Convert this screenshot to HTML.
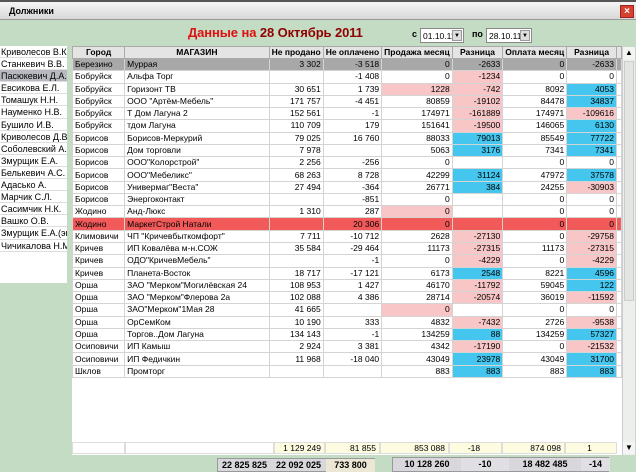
<!DOCTYPE html>
<html><head><meta charset="utf-8"><style>
*{margin:0;padding:0;box-sizing:border-box}
body{width:636px;height:472px;overflow:hidden;background:#c3dcc3;font-family:"Liberation Sans",sans-serif;position:relative}
.tb{position:absolute;left:0;top:0;width:636px;height:20px;background:linear-gradient(#f4f4f4,#d8d8d8);border-top:2px solid #555;border-bottom:1px solid #999}
.tb span{position:absolute;left:9px;top:4px;font-size:9px;font-weight:bold}
.cl{position:absolute;left:620px;top:3px;width:14px;height:13px;background:#d84030;border:1px solid #922;color:#fff;font-size:10px;line-height:11px;text-align:center;font-weight:bold}
.title{position:absolute;left:188px;top:25px;font-size:13px;font-weight:bold;color:#e01010;white-space:nowrap;letter-spacing:-0.1px}
.title b{color:#900000}
.lbl{position:absolute;top:29px;font-size:9px;font-weight:bold}
.dp{position:absolute;top:28px;height:15px;background:#fff;border:1px solid #888;font-size:8.5px;padding:2px 0 0 2px}
.dp i{position:absolute;right:1px;top:1px;width:10px;height:11px;background:#ddd;border:1px solid #999;font-style:normal;font-size:6px;text-align:center;line-height:10px}
.list{position:absolute;left:0;top:46px;width:67px;height:237px;background:#fff}
.list div{height:12.1px;font-size:9px;line-height:12px;border-bottom:1px solid #ddd;white-space:nowrap;overflow:hidden;padding-left:1px}
.list .s{background:#b8b8c0}
.grid{position:absolute;left:72px;top:46px;width:550px;height:409px;background:#fff}
table{border-collapse:collapse;table-layout:fixed;font-size:8.5px;position:absolute;left:0;top:0}
td,th{height:12.27px;line-height:11px;border:1px solid #d4d4d4;white-space:nowrap;overflow:hidden;padding:0 2px}
th{background:#e4e4e4;font-weight:bold;text-align:center;height:11px;border-color:#aaa}
td.n{text-align:right}
tr.g td{background:#a8a8a8}
tr.r td{background:#f25a5a}
td.p{background:#f8c6c6}
td.b{background:#44c6ee}
.ft{position:absolute;left:0;top:396px;height:12px;width:550px;font-size:8.5px}
.ft div{position:absolute;top:0;height:12px;background:#fdfbe0;border:1px solid #ddd;text-align:right;padding-right:3px;line-height:11px}
.sb{position:absolute;left:622px;top:47px;width:13px;height:408px;background:#eee;border-left:1px solid #ccc}
.sb .a{position:absolute;left:0;width:12px;height:12px;font-size:8px;text-align:center;line-height:12px;background:#f4f4f4}
.tot{position:absolute;height:14px;background:#d8d8dc;border:1px solid #999;font-size:9px;font-weight:bold}
.tot div{position:absolute;top:0;height:13px;line-height:13px;text-align:center}
</style></head><body>
<div class="tb"><span>Должники</span><div class="cl">×</div></div>
<div class="title">Данные на <b>28 Октябрь 2011</b></div>
<div class="lbl" style="left:412px">с</div>
<div class="dp" style="left:420px;width:44px">01.10.11<i>▼</i></div>
<div class="lbl" style="left:472px">по</div>
<div class="dp" style="left:486px;width:46px">28.10.11<i>▼</i></div>
<div class="list">
<div>Криволесов В.К.</div><div>Станкевич В.В.</div><div class="s">Пасюкевич Д.А.</div><div>Евсикова Е.Л.</div><div>Томашук Н.Н.</div><div>Науменко Н.В.</div><div>Бушило И.В.</div><div>Криволесов Д.В.</div><div>Соболевский А.А.</div><div>Змурщик Е.А.</div><div>Белькевич А.С.</div><div>Адасько А.</div><div>Марчик С.Л.</div><div>Сасимчик Н.К.</div><div>Вашко О.В.</div><div>Змурщик Е.А.(эк</div><div>Чичикалова Н.М.</div>
</div>
<div class="grid">
<table>
<colgroup><col style="width:53px"><col style="width:149px"><col style="width:51px"><col style="width:55px"><col style="width:69px"><col style="width:53px"><col style="width:63px"><col style="width:52px"><col style="width:5px"></colgroup>
<tr><th>Город</th><th>МАГАЗИН</th><th>Не продано</th><th>Не оплачено</th><th>Продажа месяц</th><th>Разница</th><th>Оплата месяц</th><th>Разница</th><th></th></tr>
<tr class="g"><td>Березино</td><td>Муррая</td><td class="n">3 302</td><td class="n">-3 518</td><td class="n">0</td><td class="n">-2633</td><td class="n">0</td><td class="n">-2633</td><td></td></tr>
<tr><td>Бобруйск</td><td>Альфа Торг</td><td class="n"></td><td class="n">-1 408</td><td class="n">0</td><td class="n p">-1234</td><td class="n">0</td><td class="n">0</td><td></td></tr>
<tr><td>Бобруйск</td><td>Горизонт ТВ</td><td class="n">30 651</td><td class="n">1 739</td><td class="n p">1228</td><td class="n p">-742</td><td class="n">8092</td><td class="n b">4053</td><td></td></tr>
<tr><td>Бобруйск</td><td>ООО "Артём-Мебель"</td><td class="n">171 757</td><td class="n">-4 451</td><td class="n">80859</td><td class="n p">-19102</td><td class="n">84478</td><td class="n b">34837</td><td></td></tr>
<tr><td>Бобруйск</td><td>Т Дом Лагуна 2</td><td class="n">152 561</td><td class="n">-1</td><td class="n">174971</td><td class="n p">-161889</td><td class="n">174971</td><td class="n p">-109616</td><td></td></tr>
<tr><td>Бобруйск</td><td>тдом Лагуна</td><td class="n">110 709</td><td class="n">179</td><td class="n">151641</td><td class="n p">-19500</td><td class="n">146065</td><td class="n b">6130</td><td></td></tr>
<tr><td>Борисов</td><td>Борисов-Меркурий</td><td class="n">79 025</td><td class="n">16 760</td><td class="n">88033</td><td class="n b">79013</td><td class="n">85549</td><td class="n b">77722</td><td></td></tr>
<tr><td>Борисов</td><td>Дом торговли</td><td class="n">7 978</td><td class="n"></td><td class="n">5063</td><td class="n b">3176</td><td class="n">7341</td><td class="n b">7341</td><td></td></tr>
<tr><td>Борисов</td><td>ООО"Колорстрой"</td><td class="n">2 256</td><td class="n">-256</td><td class="n">0</td><td class="n"></td><td class="n">0</td><td class="n">0</td><td></td></tr>
<tr><td>Борисов</td><td>ООО"Мебеликс"</td><td class="n">68 263</td><td class="n">8 728</td><td class="n">42299</td><td class="n b">31124</td><td class="n">47972</td><td class="n b">37578</td><td></td></tr>
<tr><td>Борисов</td><td>Универмаг"Веста"</td><td class="n">27 494</td><td class="n">-364</td><td class="n">26771</td><td class="n b">384</td><td class="n">24255</td><td class="n p">-30903</td><td></td></tr>
<tr><td>Борисов</td><td>Энергоконтакт</td><td class="n"></td><td class="n">-851</td><td class="n">0</td><td class="n"></td><td class="n">0</td><td class="n">0</td><td></td></tr>
<tr><td>Жодино</td><td>Анд-Люкс</td><td class="n">1 310</td><td class="n">287</td><td class="n p">0</td><td class="n"></td><td class="n">0</td><td class="n">0</td><td></td></tr>
<tr class="r"><td>Жодино</td><td>МаркетСтрой Натали</td><td class="n"></td><td class="n">20 306</td><td class="n">0</td><td class="n"></td><td class="n">0</td><td class="n">0</td><td></td></tr>
<tr><td>Климовичи</td><td>ЧП "Кричевбыткомфорт"</td><td class="n">7 711</td><td class="n">-10 712</td><td class="n">2628</td><td class="n p">-27130</td><td class="n">0</td><td class="n p">-29758</td><td></td></tr>
<tr><td>Кричев</td><td>ИП Ковалёва м-н.СОЖ</td><td class="n">35 584</td><td class="n">-29 464</td><td class="n">11173</td><td class="n p">-27315</td><td class="n">11173</td><td class="n p">-27315</td><td></td></tr>
<tr><td>Кричев</td><td>ОДО"КричевМебель"</td><td class="n"></td><td class="n">-1</td><td class="n">0</td><td class="n p">-4229</td><td class="n">0</td><td class="n p">-4229</td><td></td></tr>
<tr><td>Кричев</td><td>Планета-Восток</td><td class="n">18 717</td><td class="n">-17 121</td><td class="n">6173</td><td class="n b">2548</td><td class="n">8221</td><td class="n b">4596</td><td></td></tr>
<tr><td>Орша</td><td>ЗАО "Мерком"Могилёвская 24</td><td class="n">108 953</td><td class="n">1 427</td><td class="n">46170</td><td class="n p">-11792</td><td class="n">59045</td><td class="n b">122</td><td></td></tr>
<tr><td>Орша</td><td>ЗАО "Мерком"Флерова 2а</td><td class="n">102 088</td><td class="n">4 386</td><td class="n">28714</td><td class="n p">-20574</td><td class="n">36019</td><td class="n p">-11592</td><td></td></tr>
<tr><td>Орша</td><td>ЗАО"Мерком"1Мая 28</td><td class="n">41 665</td><td class="n"></td><td class="n p">0</td><td class="n"></td><td class="n">0</td><td class="n">0</td><td></td></tr>
<tr><td>Орша</td><td>ОрСемКом</td><td class="n">10 190</td><td class="n">333</td><td class="n">4832</td><td class="n p">-7432</td><td class="n">2726</td><td class="n p">-9538</td><td></td></tr>
<tr><td>Орша</td><td>Торгов..Дом Лагуна</td><td class="n">134 143</td><td class="n">-1</td><td class="n">134259</td><td class="n b">88</td><td class="n">134259</td><td class="n b">57327</td><td></td></tr>
<tr><td>Осиповичи</td><td>ИП Камыш</td><td class="n">2 924</td><td class="n">3 381</td><td class="n">4342</td><td class="n p">-17190</td><td class="n">0</td><td class="n p">-21532</td><td></td></tr>
<tr><td>Осиповичи</td><td>ИП Федичкин</td><td class="n">11 968</td><td class="n">-18 040</td><td class="n">43049</td><td class="n b">23978</td><td class="n">43049</td><td class="n b">31700</td><td></td></tr>
<tr><td>Шклов</td><td>Промторг</td><td class="n"></td><td class="n"></td><td class="n">883</td><td class="n b">883</td><td class="n">883</td><td class="n b">883</td><td></td></tr>
</table>
<div class="ft">
<div style="left:0;width:53px;background:#fff"></div>
<div style="left:53px;width:149px;background:#fff"></div>
<div style="left:202px;width:51px">1 129 249</div>
<div style="left:253px;width:55px">81 855</div>
<div style="left:308px;width:69px">853 088</div>
<div style="left:377px;width:53px;text-align:center">-18</div>
<div style="left:430px;width:63px">874 098</div>
<div style="left:493px;width:52px;text-align:center">1</div>
</div>
</div>
<div class="sb"><div class="a" style="top:0">▲</div><div style="position:absolute;left:1px;top:14px;width:10px;height:240px;background:#e4e4e4;border:1px solid #ccc"></div><div class="a" style="top:395px">▼</div></div>
<div class="tot" style="left:217px;top:458px;width:158px">
<div style="left:0;width:53px">22 825 825</div><div style="left:53px;width:55px">22 092 025</div><div style="left:108px;width:49px;background:#ece6d4">733 800</div>
</div>
<div class="tot" style="left:392px;top:457px;width:217px;height:15px">
<div style="left:0;width:68px">10 128 260</div><div style="left:68px;width:48px;background:#e0e0e4">-10</div><div style="left:116px;width:72px">18 482 485</div><div style="left:188px;width:29px;background:#e0e0e4">-14</div>
</div>
</body></html>
